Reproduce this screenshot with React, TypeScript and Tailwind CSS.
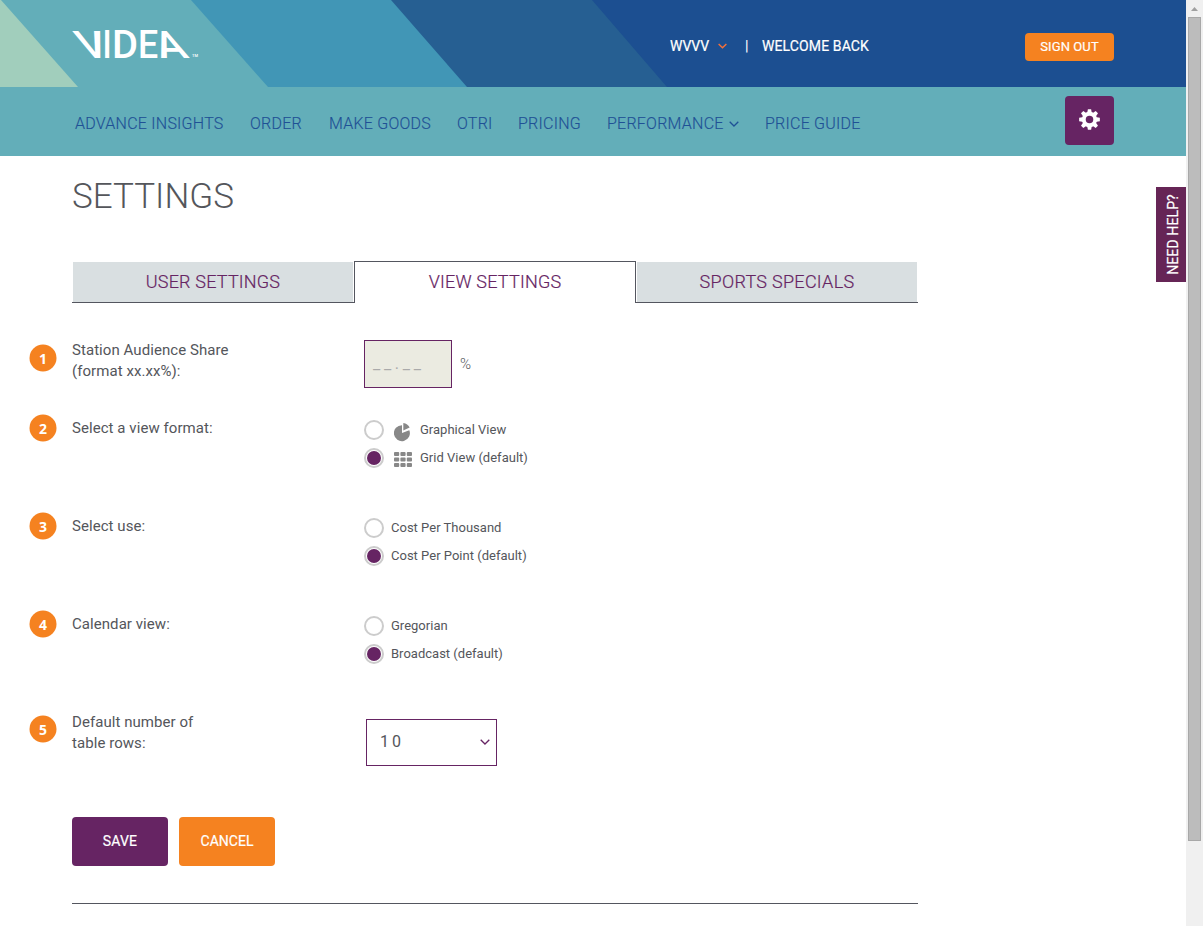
import React from "react";

const navItems = [
  { label: "ADVANCE INSIGHTS", width: "w-[175px]" },
  { label: "ORDER", width: "w-[79px]" },
  { label: "MAKE GOODS", width: "w-[128px]" },
  { label: "OTRI", width: "w-[61px]" },
  { label: "PRICING", width: "w-[89px]" },
  { label: "PERFORMANCE", width: "w-[158px]", menu: true },
  { label: "PRICE GUIDE", width: "w-[110px]" },
];

function Chevron({ className, weight = 1.3 }: { className: string; weight?: number }) {
  return (
    <svg viewBox="0 0 10 6" fill="none" stroke="currentColor" className={className}>
      <path d="M0.7 0.7 L5 5 L9.3 0.7" strokeWidth={weight} />
    </svg>
  );
}

function Logo() {
  return (
    <div className="relative mt-[31px] ml-[72px] flex h-[28px] w-[126px] text-[38px] leading-[28px] font-medium text-white">
      <span className="flex w-[30px] shrink-0 translate-x-[5px] scale-x-[1.16] skew-x-[20deg] justify-center">V</span>
      <span className="flex w-[10px] shrink-0 scale-x-[0.85] justify-center">I</span>
      <span className="flex w-[26px] shrink-0 scale-x-[1.05] justify-center">D</span>
      <span className="flex w-[20px] shrink-0 scale-x-[0.94] justify-center">E</span>
      <span className="ml-[2px] flex w-[30px] shrink-0 translate-x-[-5px] scale-x-[1.16] skew-x-[20deg] justify-center">A</span>
      <span className="mt-[23px] ml-[2px] text-[4px] leading-[4px]">TM</span>
    </div>
  );
}

function Gear() {
  return (
    <svg viewBox="-12 -12 24 24" className="h-[23px] w-[23px] -translate-y-px" fill="#fff">
      {[0, 45, 90, 135].map((a) => (
        <path key={a} d="M-1.7 -10.8 H1.7 L2.6 -6 V6 L1.7 10.8 H-1.7 L-2.6 6 V-6 Z" transform={`rotate(${a})`} />
      ))}
      <circle r="8" />
      <circle r="3.9" fill="#662463" />
    </svg>
  );
}

function PieIcon() {
  return (
    <svg viewBox="0 0 18 20" className="mt-[3px] h-[20px] w-[18px]" fill="#888">
      <path d="M8 3.2 V11 L15.3 8.2 A8 8 0 1 1 8 3.2 Z" />
      <path d="M9.3 1 A8 8 0 0 1 15.6 5.6 L9.3 8.6 Z" />
    </svg>
  );
}

function GridIcon() {
  return (
    <svg viewBox="0 0 18 16" className="mt-[3px] h-[16px] w-[18px]" fill="#888">
      {[0, 5.5, 11].map((y) =>
        [0, 6.4, 12.8].map((x) => <rect key={`${x}-${y}`} x={x} y={y} width="5.2" height="4" rx="0.9" />)
      )}
    </svg>
  );
}

function Option({ label, checked, icon }: { label: string; checked?: boolean; icon?: React.ReactNode }) {
  return (
    <label className="flex h-[20px] items-center">
      <span className="flex h-[20px] w-[20px] items-center justify-center rounded-full border-2 border-[#ccc] bg-white">
        {checked && <span className="h-[14px] w-[14px] rounded-full bg-[#662463]" />}
      </span>
      {icon && <span className="ml-[10px] flex w-[19px] items-center">{icon}</span>}
      <span className="ml-[7px] text-[13px] leading-[20px] tracking-[0.01px] whitespace-nowrap">{label}</span>
    </label>
  );
}

function Row({
  n,
  label,
  height,
  circle,
  control,
  children,
}: {
  n: number;
  label: React.ReactNode;
  height: string;
  circle: string;
  control: string;
  children: React.ReactNode;
}) {
  return (
    <div className={`flex ${height}`}>
      <div className={`w-[43px] shrink-0 ${circle}`}>
        <div className="relative flex h-[28px] w-[28px] items-center justify-center pt-[2px] font-['Open_Sans',sans-serif] text-[14px] leading-[20px] font-bold text-white">
          <svg viewBox="0 0 28 28" className="absolute inset-0 h-[28px] w-[28px]">
            <circle cx="14" cy="14" r="13.5" fill="#f58220" />
          </svg>
          <span className="relative">{n}</span>
        </div>
      </div>
      <div className="w-[292px] shrink-0 pt-[8px] text-[15px] leading-[21px] tracking-[0.06px]">{label}</div>
      <div className={`flex flex-col gap-[8px] ${control}`}>{children}</div>
    </div>
  );
}

function Header() {
  return (
    <header className="relative flex h-[87px] bg-[#1c4f91]">
      <svg viewBox="0 0 1186 87" className="absolute inset-0 h-[87px] w-[1186px]">
        <path d="M0 0 H592 L667 87 H0 Z" fill="#265f92" />
        <path d="M0 0 H391 L467 87 H0 Z" fill="#4196b6" />
        <path d="M0 0 H191 L268 87 H0 Z" fill="#63aeb9" />
        <path d="M0 0 H1 L78 87 H0 Z" fill="#a1cebc" />
      </svg>
      <Logo />
      <div className="relative ml-[472px] flex h-[92px] flex-1 items-center text-[14px] font-medium text-white">
        <span className="w-[48px] font-normal [-webkit-text-stroke:0.2px_white]">WVVV</span>
        <Chevron className="-mt-px h-[6px] w-[9px] text-[#f4703a]" weight={1.6} />
        <span className="ml-[18px] w-[17px]">|</span>
        <span className="font-normal tracking-[0.12px] whitespace-nowrap [-webkit-text-stroke:0.2px_white]">WELCOME BACK</span>
      </div>
      <button className="relative mt-[33px] mr-[72px] h-[28px] w-[89px] rounded-[4px] bg-[#f58220] pb-px text-[13px] tracking-[0.1px] text-white [-webkit-text-stroke:0.2px_white]">
        SIGN OUT
      </button>
    </header>
  );
}

export default function App() {
  return (
    <div className="flex h-[926px] w-[1203px] overflow-hidden bg-white font-[Roboto,sans-serif] text-[#54565b]">
      <div className="relative w-[1186px] shrink-0">
        <Header />
        <nav className="flex h-[69px] bg-[#63aeb9] pr-[72px] pl-[75px]">
          <div className="flex h-[73px] flex-1 items-center text-[16px] font-light tracking-[0.24px] text-[#1f5196] [-webkit-text-stroke:0.15px_#1f5196]">
            {navItems.map((item) => (
              <a key={item.label} className={`flex shrink-0 items-center whitespace-nowrap ${item.width}`}>
                {item.label}
                {item.menu && <Chevron className="ml-[5px] h-[6px] w-[10px]" />}
              </a>
            ))}
          </div>
          <button className="mt-[9px] flex h-[49px] w-[49px] items-center justify-center rounded-[4px] bg-[#662463]">
            <Gear />
          </button>
        </nav>

        <main className="px-[72px]">
          <h1 className="pt-[21px] text-[35px] leading-[40px] font-light">SETTINGS</h1>
          <div className="mt-[44px] flex h-[42px] w-[846px] text-center text-[18px] font-light tracking-[0.2px] text-[#662463] [-webkit-text-stroke:0.2px_#662463]">
            <div className="w-[282px] border-b border-[#54565f] pt-px pr-px pl-px">
              <div className="h-[40px] bg-[#d9dfe1] leading-[40px]">USER SETTINGS</div>
            </div>
            <div className="w-[282px] border-x border-t border-[#54565f] leading-[40px]">VIEW SETTINGS</div>
            <div className="w-[282px] border-b border-[#54565f] pt-px pr-px pl-px">
              <div className="h-[40px] bg-[#d9dfe1] leading-[40px] tracking-[0.3px]">SPORTS SPECIALS</div>
            </div>
          </div>

          <form className="mt-[29px] ml-[-43px]">
            <Row n={1} label={<>Station Audience Share<br />(format xx.xx%):</>} height="h-[78px]" circle="pt-[12px]" control="pt-[8px]">
              <div className="flex items-center">
                <div className="flex h-[48px] w-[88px] items-center border border-[#662463] bg-[#ebebe1] pl-[8px] text-[16px] tracking-[3.7px] text-[#aaa]">
                  __.__
                </div>
                <span className="ml-[8px] text-[15px] font-light">%</span>
              </div>
            </Row>
            <Row n={2} label="Select a view format:" height="h-[98px]" circle="pt-[4px]" control="pt-[10px]">
              <Option label="Graphical View" icon={<PieIcon />} />
              <Option label="Grid View (default)" icon={<GridIcon />} checked />
            </Row>
            <Row n={3} label="Select use:" height="h-[98px]" circle="pt-[4px]" control="pt-[10px]">
              <Option label="Cost Per Thousand" />
              <Option label="Cost Per Point (default)" checked />
            </Row>
            <Row n={4} label="Calendar view:" height="h-[98px]" circle="pt-[4px]" control="pt-[10px]">
              <Option label="Gregorian" />
              <Option label="Broadcast (default)" checked />
            </Row>
            <Row n={5} label={<>Default number of<br />table rows:</>} height="h-[113px]" circle="pt-[11px]" control="pt-[15px] pl-[2px]">
              <div className="flex h-[47px] w-[131px] items-center justify-between border border-[#662463] pr-[6px] pb-[2px] pl-[13px] text-[16px] tracking-[3px]">
                10
                <Chevron className="h-[6px] w-[10px] text-[#662463]" />
              </div>
            </Row>
          </form>

          <div className="flex gap-[11px] text-[14px] text-white [-webkit-text-stroke:0.2px_white]">
            <button className="h-[49px] w-[96px] rounded-[4px] bg-[#662463] tracking-[0.2px]">SAVE</button>
            <button className="h-[49px] w-[96px] rounded-[4px] bg-[#f58220]">CANCEL</button>
          </div>
          <div className="mt-[37px] h-px w-[846px] bg-[#54565f]" />
        </main>

        <div className="absolute top-[187px] right-0 flex h-[95px] w-[30px] items-center justify-center bg-[#662556]">
          <span className="ml-[5px] -rotate-90 text-[14px] tracking-[0.12px] whitespace-nowrap text-white [-webkit-text-stroke:0.2px_white]">NEED HELP?</span>
        </div>
      </div>

      <div className="flex w-[17px] shrink-0 flex-col items-center bg-[#f0f0f0]">
        <div className="flex h-[17px] items-center">
          <svg viewBox="0 0 7 4" className="mt-px h-[4px] w-[7px]" fill="#a0a0a0">
            <path d="M0 4 L3.5 0 L7 4 Z" />
          </svg>
        </div>
        <div className="h-[824px] w-[13px] border border-[#a8a8a8] bg-[#bcbcbc]" />
      </div>
    </div>
  );
}
